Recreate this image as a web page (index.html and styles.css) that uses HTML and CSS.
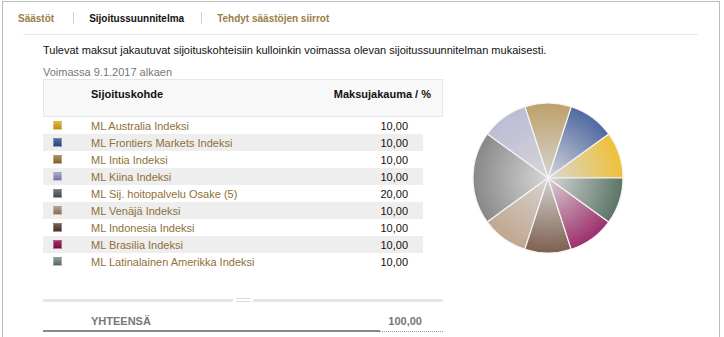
FILE: index.html
```html
<!DOCTYPE html>
<html lang="fi">
<head>
<meta charset="utf-8">
<title>Sijoitussuunnitelma</title>
<link rel="stylesheet" href="styles.css">
</head>
<body>
<div class="frame">
  <nav class="tabs">
    <a class="tab">Säästöt</a><span class="sep"></span>
    <a class="tab active">Sijoitussuunnitelma</a><span class="sep"></span>
    <a class="tab">Tehdyt säästöjen siirrot</a>
  </nav>
  <div class="content">
    <p class="intro">Tulevat maksut jakautuvat sijoituskohteisiin kulloinkin voimassa olevan sijoitussuunnitelman mukaisesti.</p>
    <div class="plan">
      <div class="left">
        <div class="valid">Voimassa 9.1.2017 alkaen</div>
        <div class="thead">
          <span class="th-name">Sijoituskohde</span>
          <span class="th-val">Maksujakauma / %</span>
        </div>
        <div class="rows">
          <div class="row"><span class="sw"><i class="sq c1"></i></span><a class="name">ML Australia Indeksi</a><span class="val">10,00</span></div>
          <div class="row alt"><span class="sw"><i class="sq c2"></i></span><a class="name">ML Frontiers Markets Indeksi</a><span class="val">10,00</span></div>
          <div class="row"><span class="sw"><i class="sq c3"></i></span><a class="name">ML Intia Indeksi</a><span class="val">10,00</span></div>
          <div class="row alt"><span class="sw"><i class="sq c4"></i></span><a class="name">ML Kiina Indeksi</a><span class="val">10,00</span></div>
          <div class="row"><span class="sw"><i class="sq c5"></i></span><a class="name">ML Sij. hoitopalvelu Osake (5)</a><span class="val">20,00</span></div>
          <div class="row alt"><span class="sw"><i class="sq c6"></i></span><a class="name">ML Venäjä Indeksi</a><span class="val">10,00</span></div>
          <div class="row"><span class="sw"><i class="sq c7"></i></span><a class="name">ML Indonesia Indeksi</a><span class="val">10,00</span></div>
          <div class="row alt"><span class="sw"><i class="sq c8"></i></span><a class="name">ML Brasilia Indeksi</a><span class="val">10,00</span></div>
          <div class="row"><span class="sw"><i class="sq c9"></i></span><a class="name">ML Latinalainen Amerikka Indeksi</a><span class="val">10,00</span></div>
        </div>
        <div class="resizer"><span class="bar"></span><span class="grip"></span><span class="bar"></span></div>
        <div class="total">
          <span class="t-label">YHTEENSÄ</span>
          <span class="t-val">100,00</span>
        </div>
      </div>
      <svg class="pie" width="154" height="154" viewBox="0 0 154 154">
        <defs>
          <radialGradient id="g1" gradientUnits="userSpaceOnUse" cx="77" cy="77" r="75"><stop offset="0" stop-color="#d8d8d6"/><stop offset="1" stop-color="#f0c038"/></radialGradient>
          <radialGradient id="g2" gradientUnits="userSpaceOnUse" cx="77" cy="77" r="75"><stop offset="0" stop-color="#d6d6d8"/><stop offset="1" stop-color="#4f69a3"/></radialGradient>
          <radialGradient id="g3" gradientUnits="userSpaceOnUse" cx="77" cy="77" r="75"><stop offset="0" stop-color="#d6d4d0"/><stop offset="1" stop-color="#bfa16b"/></radialGradient>
          <radialGradient id="g4" gradientUnits="userSpaceOnUse" cx="77" cy="77" r="75"><stop offset="0" stop-color="#d6d6d8"/><stop offset="1" stop-color="#bcbcd6"/></radialGradient>
          <radialGradient id="g5" gradientUnits="userSpaceOnUse" cx="77" cy="77" r="75"><stop offset="0" stop-color="#d8d8d8"/><stop offset="1" stop-color="#888888"/></radialGradient>
          <radialGradient id="g6" gradientUnits="userSpaceOnUse" cx="77" cy="77" r="75"><stop offset="0" stop-color="#d6d4d2"/><stop offset="1" stop-color="#c2a68e"/></radialGradient>
          <radialGradient id="g7" gradientUnits="userSpaceOnUse" cx="77" cy="77" r="75"><stop offset="0" stop-color="#d4d2d0"/><stop offset="1" stop-color="#7e6050"/></radialGradient>
          <radialGradient id="g8" gradientUnits="userSpaceOnUse" cx="77" cy="77" r="75"><stop offset="0" stop-color="#d6d2d4"/><stop offset="1" stop-color="#9e2e6c"/></radialGradient>
          <radialGradient id="g9" gradientUnits="userSpaceOnUse" cx="77" cy="77" r="75"><stop offset="0" stop-color="#d6d8d6"/><stop offset="1" stop-color="#5c7466"/></radialGradient>
        </defs>
        <g stroke="#f4f4f4" stroke-width="1.2" stroke-linejoin="round">
          <path fill="url(#g1)" d="M77 77 L152 77 A75 75 0 0 0 137.68 32.92 Z"/>
          <path fill="url(#g2)" d="M77 77 L137.68 32.92 A75 75 0 0 0 100.18 5.67 Z"/>
          <path fill="url(#g3)" d="M77 77 L100.18 5.67 A75 75 0 0 0 53.82 5.67 Z"/>
          <path fill="url(#g4)" d="M77 77 L53.82 5.67 A75 75 0 0 0 16.32 32.92 Z"/>
          <path fill="url(#g5)" d="M77 77 L16.32 32.92 A75 75 0 0 0 16.32 121.08 Z"/>
          <path fill="url(#g6)" d="M77 77 L16.32 121.08 A75 75 0 0 0 53.82 148.33 Z"/>
          <path fill="url(#g7)" d="M77 77 L53.82 148.33 A75 75 0 0 0 100.18 148.33 Z"/>
          <path fill="url(#g8)" d="M77 77 L100.18 148.33 A75 75 0 0 0 137.68 121.08 Z"/>
          <path fill="url(#g9)" d="M77 77 L137.68 121.08 A75 75 0 0 0 152 77 Z"/>
        </g>
      </svg>
    </div>
  </div>
</div>
</body>
</html>
```
FILE: styles.css
```css
* { box-sizing: border-box; }
html, body { margin: 0; padding: 0; background: #fff; }
body {
  font-family: "Liberation Sans", Arial, Helvetica, sans-serif;
  font-size: 11px;
  color: #222;
  overflow: hidden;
}
.frame {
  margin: 1px 0 0 2px;
  width: 718px;
  height: 336px;
  border: 1px solid #bcbcbc;
  border-bottom: none;
  overflow: hidden;
}
.tabs {
  display: flex;
  align-items: center;
  height: 32px;
  padding-left: 15px;
}
.tab {
  font-size: 10px;
  font-weight: bold;
  color: #9a7e44;
  text-decoration: none;
}
.tab.active { color: #111; }
.sep {
  width: 1px;
  height: 12px;
  background: #d0d0d0;
  margin: 0 15px 0 19px;
}
.tab.active + .sep { margin-left: 17px; }
.content {
  margin: 0 21px 0 20px;
  border-top: 1px solid #e6e6e6;
  padding: 0 20px;
}
.intro {
  margin: 7px 0 0;
  line-height: 16px;
  color: #111;
}
.plan {
  display: flex;
  align-items: flex-start;
  margin-top: 8px;
}
.left { width: 400px; }
.valid {
  color: #777;
  line-height: 13px;
}
.thead {
  display: flex;
  justify-content: space-between;
  height: 38px;
  border: 1px solid #e6e6e6;
  background: #f8f8f8;
  padding: 6px 11px 0 47px;
  font-weight: bold;
  line-height: 16px;
  color: #111;
}
.rows { width: 380px; }
.row {
  display: flex;
  align-items: center;
  height: 17px;
}
.row.alt { background: #eeeeee; }
.sw {
  width: 48px;
  display: flex;
  padding-left: 10px;
}
.sq {
  display: block;
  width: 9px;
  height: 9px;
  border: 1px solid rgba(255,255,255,0.35);
}
.c1 { background: linear-gradient(#e8b830, #b88a20); }
.c2 { background: linear-gradient(#4f6da6, #2c4274); }
.c3 { background: linear-gradient(#ad8c55, #806232); }
.c4 { background: linear-gradient(#a8a8cc, #74749a); }
.c5 { background: linear-gradient(#777, #444); }
.c6 { background: linear-gradient(#b59e8c, #856c5a); }
.c7 { background: linear-gradient(#745c4c, #433228); }
.c8 { background: linear-gradient(#a62a62, #721244); }
.c9 { background: linear-gradient(#889e92, #56685e); }
.name {
  flex: 1;
  color: #8f7038;
  text-decoration: none;
}
.val {
  padding-right: 15px;
  color: #111;
}
.resizer {
  display: flex;
  align-items: center;
  margin-top: 28px;
  height: 4px;
}
.bar {
  flex: 1;
  height: 3px;
  background: #e6e6e6;
}
.grip {
  width: 14px;
  height: 4px;
  margin: 0 3px;
  border-top: 1px solid #dadada;
  border-bottom: 1px solid #dadada;
}
.total {
  display: flex;
  justify-content: space-between;
  height: 30px;
  padding: 11px 21px 0 48px;
  line-height: 16px;
  font-weight: bold;
  color: #777;
  background:
    linear-gradient(#888, #888) left bottom / 337px 2px no-repeat,
    repeating-linear-gradient(90deg, #999 0 1px, transparent 1px 2px) right bottom / 63px 1px no-repeat;
}
.pie {
  display: block;
  margin: 35px 0 0 28px;
}
```
